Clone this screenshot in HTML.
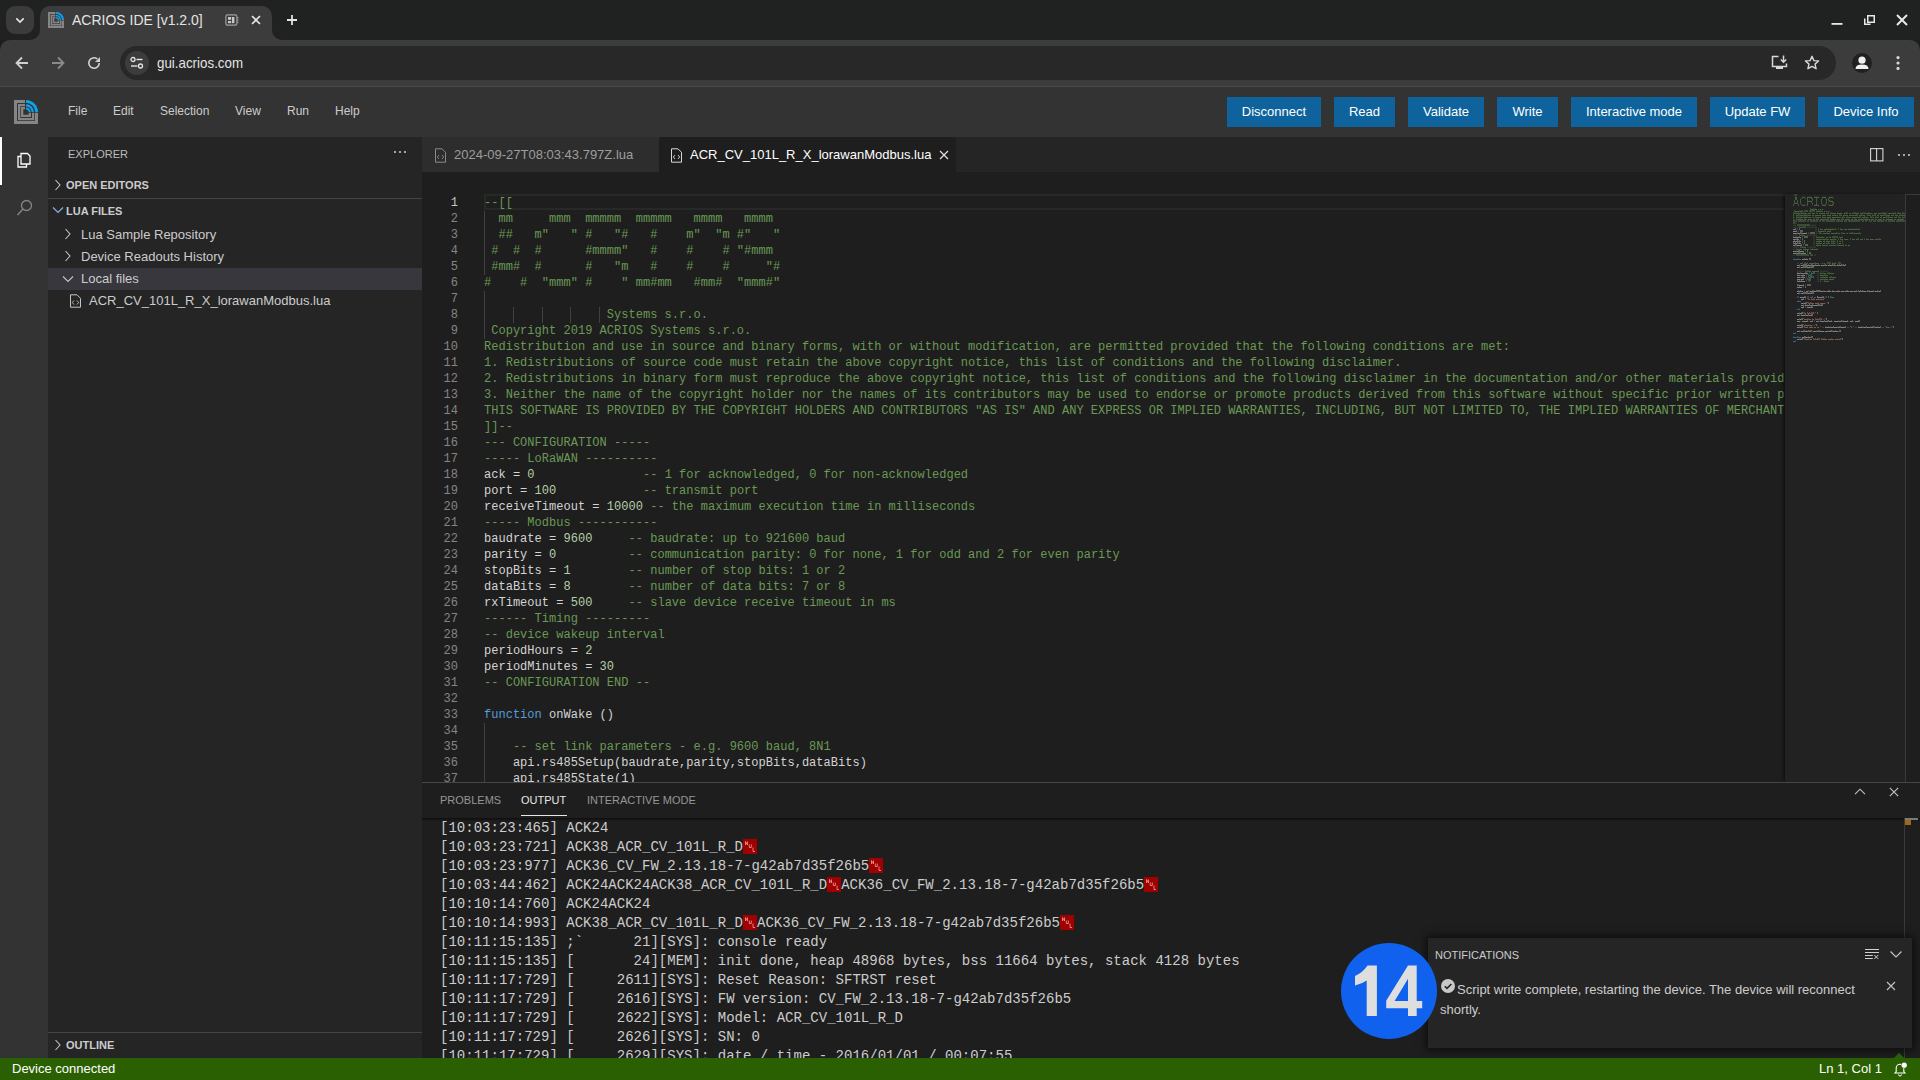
<!DOCTYPE html>
<html><head><meta charset="utf-8">
<style>
*{margin:0;padding:0;box-sizing:border-box}
html,body{width:1920px;height:1080px;overflow:hidden;background:#1e1e1e;font-family:"Liberation Sans",sans-serif}
.a{position:absolute}
/* chrome frame */
#frame{left:0;top:0;width:1920px;height:40px;background:#202121}
#tabdd{left:6px;top:6px;width:28px;height:28px;border-radius:9px;background:#3b3b3b}
#ctab{left:40px;top:6px;width:232px;height:34px;background:#3c3c3c;border-radius:10px 10px 0 0}
.flare{width:10px;height:10px;top:30px}
#ctitle{left:72px;top:11px;font-size:14px;color:#e3e3e3;line-height:18px;white-space:nowrap}
#toolbar{left:0;top:40px;width:1920px;height:46px;background:#3c3c3c;border-radius:10px 10px 0 0}
#tbline{left:0;top:86px;width:1920px;height:1px;background:#4a4a4a}
#omni{left:120px;top:46px;width:1716px;height:34px;border-radius:17px;background:#282828}
#siteinfo{left:125px;top:51px;width:24px;height:24px;border-radius:12px;background:#3c3c3c}
#url{left:157px;top:54px;font-size:15px;color:#e3e3e3;line-height:18px;transform:scaleX(0.89);transform-origin:0 0}
/* ide menubar */
#menubar{left:0;top:87px;width:1920px;height:50px;background:#333333}
.mi{top:103px;font-size:12px;color:#cccccc;line-height:16px}
.btn{top:97px;height:30px;background:#0e639c;color:#ffffff;font-size:13px;line-height:30px;text-align:center}
/* activity bar */
#actbar{left:0;top:137px;width:48px;height:921px;background:#333333}
#actind{left:0;top:137px;width:2px;height:48px;background:#ffffff}
/* sidebar */
#sidebar{left:48px;top:137px;width:374px;height:921px;background:#252526}
.sbh{font-size:11px;color:#bbbbbb;line-height:14px}
.sbsec{font-size:11px;font-weight:bold;color:#cccccc;line-height:14px}
.sbi{font-size:13px;color:#cccccc;line-height:18px;white-space:nowrap}
/* editor */
#tabbar{left:422px;top:137px;width:1498px;height:35px;background:#252526}
#tab1{left:422px;top:137px;width:237px;height:35px;background:#2d2d2d}
#tab2{left:659px;top:137px;width:297px;height:35px;background:#1e1e1e}
.tabt{top:147px;font-size:13px;line-height:16px;white-space:nowrap}
#editor{left:422px;top:172px;width:1498px;height:610px;background:#1e1e1e;overflow:hidden}
.cl{position:absolute;left:484px;width:1300px;overflow:hidden;height:16px;font-family:"Liberation Mono",monospace;font-size:12px;letter-spacing:0.0235px;line-height:16px;color:#d4d4d4;white-space:pre}
.ln{position:absolute;left:420px;width:38px;text-align:right;height:16px;font-family:"Liberation Mono",monospace;font-size:12px;line-height:16px;color:#858585}
.ln.act{color:#c6c6c6}
.ig{position:absolute;width:1px;height:16px;background:#404040}
#curline{left:484px;top:194px;width:1310px;height:16px;border:2px solid #282828}
#mmbg{left:1785px;top:194px;width:120px;height:588px;background:#1e1e1e;box-shadow:-2px 0 3px -1px #0a0a0a}
#mmslider{left:1785px;top:194px;width:120px;height:588px;background:rgba(121,121,121,0.05)}
.mm{position:absolute;left:1793px;top:194px;opacity:0.9}
#vscroll{left:1905px;top:194px;width:1px;height:588px;background:#3a3a3a}
/* panel */
#panel{left:422px;top:782px;width:1498px;height:276px;background:#1e1e1e;border-top:1px solid #474747}
.ptab{top:793px;font-size:11px;line-height:14px;color:#969696}
#outshadow{left:422px;top:818px;width:1498px;height:3px;box-shadow:inset 0 3px 3px -2px #0a0a0a}
.ol{position:absolute;left:440px;height:19px;font-family:"Liberation Mono",monospace;font-size:14px;letter-spacing:0.015px;line-height:19px;color:#cccccc;white-space:pre}
.nul{display:inline-block;width:14px;height:15px;vertical-align:top;margin-top:1px}
/* status bar */
#status{left:0;top:1058px;width:1920px;height:22px;background:#2b6002}
.st{top:1061px;font-size:13px;line-height:16px;color:#ffffff}
/* notification */
#notif{left:1428px;top:938px;width:484px;height:110px;background:#252526;box-shadow:0 0 8px 2px rgba(0,0,0,0.6)}
#circle{left:1341px;top:943px;width:96px;height:96px;border-radius:48px;background:#1062ee}
#circnum{left:1341px;top:943px;width:96px;height:96px;line-height:96px;text-align:center;font-size:71px;font-weight:bold;color:#e0e0e0;letter-spacing:-5px;text-indent:-4px}
</style></head><body>
<!-- ===== Chrome frame ===== -->
<div id="frame" class="a"></div>
<div id="tabdd" class="a"></div>
<svg class="a" style="left:12px;top:13px" width="16" height="14" viewBox="0 0 16 14"><path d="M4.3 5.3 L8 9 L11.7 5.3" stroke="#e3e3e3" stroke-width="1.7" fill="none"/></svg>
<div id="ctab" class="a"></div>
<svg class="a" style="left:30px;top:30px" width="10" height="10"><path d="M0 10 A10 10 0 0 0 10 0 L10 10 Z" fill="#3c3c3c"/></svg>
<svg class="a" style="left:272px;top:30px" width="10" height="10"><path d="M10 10 A10 10 0 0 1 0 0 L0 10 Z" fill="#3c3c3c"/></svg>
<!-- favicon -->
<svg class="a" style="left:48px;top:12px" width="16" height="16" viewBox="0 0 24 24"><g fill="#858585"><path d="M0 0H11V3H3V21H21V12.7H24V24H0Z"/><path d="M4 4H11V6.3H6.3V18H18V12.7H20.3V20.3H4Z"/><path d="M7 7H11V9.3H9.3V14.7H14.7V12.7H17V17H7Z"/></g><g fill="none" stroke="#0ea2ea"><path d="M12 1.4A10.6 10.6 0 0 1 22.6 12" stroke-width="2.7"/><path d="M12 5.3A6.7 6.7 0 0 1 18.7 12" stroke-width="2.2"/><path d="M12 8.4A3.6 3.6 0 0 1 15.6 12" stroke-width="2"/></g></svg>
<div id="ctitle" class="a">ACRIOS IDE [v1.2.0]</div>
<svg class="a" style="left:225px;top:14px" width="14" height="12" viewBox="0 0 14 12"><rect x="0.9" y="0.8" width="11" height="10.4" rx="1.6" stroke="#a0a0a0" stroke-width="1.2" fill="none"/><rect x="3" y="3" width="3.2" height="2.8" fill="#c8c8c8"/><rect x="3" y="7" width="3.2" height="2.2" fill="#c8c8c8"/><rect x="7" y="3" width="2.4" height="6.2" fill="#c8c8c8"/><rect x="12.2" y="3.2" width="1.4" height="1" fill="#a0a0a0"/><rect x="12.2" y="5.5" width="1.4" height="1" fill="#a0a0a0"/><rect x="12.2" y="7.8" width="1.4" height="1" fill="#a0a0a0"/></svg>
<svg class="a" style="left:251px;top:15px" width="10" height="10" viewBox="0 0 10 10"><path d="M1 1 L9 9 M9 1 L1 9" stroke="#e8e8e8" stroke-width="1.6"/></svg>
<svg class="a" style="left:286px;top:14px" width="12" height="12" viewBox="0 0 12 12"><path d="M6 1 V11 M1 6 H11" stroke="#e3e3e3" stroke-width="1.8"/></svg>
<!-- window controls -->
<svg class="a" style="left:1831px;top:14px" width="12" height="12"><rect x="0.5" y="9" width="11" height="1.8" fill="#e8e8e8"/></svg>
<svg class="a" style="left:1864px;top:15px" width="11" height="11"><rect x="3.75" y="0.75" width="6.5" height="6.5" stroke="#e8e8e8" stroke-width="1.5" fill="none"/><path d="M0.75 3.5 V9.25 H6.5" stroke="#e8e8e8" stroke-width="1.5" fill="none"/></svg>
<svg class="a" style="left:1896px;top:14px" width="12" height="12"><path d="M1 1 L11 11 M11 1 L1 11" stroke="#e8e8e8" stroke-width="2"/></svg>

<!-- ===== Toolbar ===== -->
<div id="toolbar" class="a"></div>
<svg class="a" style="left:14px;top:55px" width="16" height="16" viewBox="0 0 16 16"><path d="M14 8 H2.5 M8 2.5 L2.5 8 L8 13.5" stroke="#d0d0d0" stroke-width="1.8" fill="none"/></svg>
<svg class="a" style="left:50px;top:55px" width="16" height="16" viewBox="0 0 16 16"><path d="M2 8 H13.5 M8 2.5 L13.5 8 L8 13.5" stroke="#8a8a8a" stroke-width="1.8" fill="none"/></svg>
<svg class="a" style="left:82px;top:51px" width="24" height="24" viewBox="0 0 24 24"><path d="M17.2 12 A5.2 5.2 0 1 1 15.3 8" stroke="#d0d0d0" stroke-width="1.6" fill="none"/><path d="M18 6 V11 H13 Z" fill="#d0d0d0"/></svg>
<div id="omni" class="a"></div>
<div id="siteinfo" class="a"></div>
<svg class="a" style="left:130px;top:56px" width="14" height="14" viewBox="0 0 14 14"><circle cx="3" cy="3.5" r="2" stroke="#e3e3e3" stroke-width="1.3" fill="none"/><path d="M6.5 3.5 H12.5" stroke="#e3e3e3" stroke-width="1.4"/><circle cx="10.5" cy="10" r="2" stroke="#e3e3e3" stroke-width="1.3" fill="none"/><path d="M1 10 H7.5" stroke="#e3e3e3" stroke-width="1.4"/></svg>
<div id="url" class="a">gui.acrios.com</div>
<svg class="a" style="left:1771px;top:55px" width="18" height="16" viewBox="0 0 18 16"><path d="M7.5 1.5 H1.5 V11.5 H15.5 V8.5" stroke="#d8d8d8" stroke-width="1.5" fill="none"/><rect x="5" y="12" width="7" height="2" fill="#d8d8d8"/><path d="M12.5 0.5 V7 M9.8 4.5 L12.5 7.2 L15.2 4.5" stroke="#d8d8d8" stroke-width="1.5" fill="none"/></svg>
<svg class="a" style="left:1804px;top:55px" width="16" height="16" viewBox="0 0 16 16"><path d="M8 1.3 L9.9 5.6 L14.6 6 L11 9.1 L12.1 13.7 L8 11.3 L3.9 13.7 L5 9.1 L1.4 6 L6.1 5.6 Z" stroke="#d8d8d8" stroke-width="1.4" fill="none" stroke-linejoin="round"/></svg>
<div class="a" style="left:1852px;top:53px;width:20px;height:20px;border-radius:10px;background:#202020"></div>
<svg class="a" style="left:1852px;top:53px" width="20" height="20" viewBox="0 0 20 20"><circle cx="10" cy="7.2" r="3.6" fill="#f0f0f0"/><path d="M3.5 16 Q3.5 11.6 10 11.6 Q16.5 11.6 16.5 16 Z" fill="#f0f0f0"/></svg>
<svg class="a" style="left:1894px;top:55px" width="8" height="16"><circle cx="4" cy="2.6" r="1.6" fill="#d8d8d8"/><circle cx="4" cy="8" r="1.6" fill="#d8d8d8"/><circle cx="4" cy="13.4" r="1.6" fill="#d8d8d8"/></svg>
<div id="tbline" class="a"></div>

<!-- ===== IDE menubar ===== -->
<div id="menubar" class="a"></div>
<svg class="a" style="left:14px;top:100px" width="24" height="24" viewBox="0 0 24 24"><g fill="#858585"><path d="M0 0H11V3H3V21H21V12.7H24V24H0Z"/><path d="M4 4H11V6.3H6.3V18H18V12.7H20.3V20.3H4Z"/><path d="M7 7H11V9.3H9.3V14.7H14.7V12.7H17V17H7Z"/></g><g fill="none" stroke="#0ea2ea"><path d="M12 1.4A10.6 10.6 0 0 1 22.6 12" stroke-width="2.7"/><path d="M12 5.3A6.7 6.7 0 0 1 18.7 12" stroke-width="2.2"/><path d="M12 8.4A3.6 3.6 0 0 1 15.6 12" stroke-width="2"/></g></svg>
<div class="a mi" style="left:68px">File</div>
<div class="a mi" style="left:113px">Edit</div>
<div class="a mi" style="left:160px">Selection</div>
<div class="a mi" style="left:235px">View</div>
<div class="a mi" style="left:287px">Run</div>
<div class="a mi" style="left:335px">Help</div>
<div class="a btn" style="left:1227px;width:94px">Disconnect</div>
<div class="a btn" style="left:1334px;width:61px">Read</div>
<div class="a btn" style="left:1408px;width:76px">Validate</div>
<div class="a btn" style="left:1497px;width:61px">Write</div>
<div class="a btn" style="left:1571px;width:126px">Interactive mode</div>
<div class="a btn" style="left:1710px;width:95px">Update FW</div>
<div class="a btn" style="left:1818px;width:96px">Device Info</div>

<!-- ===== Activity bar ===== -->
<div id="actbar" class="a"></div>
<div id="actind" class="a"></div>
<svg class="a" style="left:14px;top:150px" width="20" height="20" viewBox="0 0 20 20"><path d="M7 3.5 H13.5 L16 6 V14 H7 Z" stroke="#ffffff" stroke-width="1.3" fill="none"/><path d="M7 6.5 H4 V17 H12.5 V14" stroke="#ffffff" stroke-width="1.3" fill="none"/></svg>
<svg class="a" style="left:15px;top:198px" width="20" height="20" viewBox="0 0 20 20"><circle cx="11.5" cy="7.5" r="5" stroke="#858585" stroke-width="1.3" fill="none"/><path d="M8 11 L2.5 17" stroke="#858585" stroke-width="1.4"/></svg>

<!-- ===== Sidebar ===== -->
<div id="sidebar" class="a"></div>
<div class="a sbh" style="left:68px;top:147px">EXPLORER</div>
<svg class="a" style="left:392px;top:148px" width="16" height="8"><circle cx="3" cy="4" r="1.1" fill="#c5c5c5"/><circle cx="8" cy="4" r="1.1" fill="#c5c5c5"/><circle cx="13" cy="4" r="1.1" fill="#c5c5c5"/></svg>
<svg class="a" style="left:54px;top:179px" width="8" height="12" viewBox="0 0 8 12"><path d="M1.5 1 L6 6 L1.5 11" stroke="#c5c5c5" stroke-width="1.1" fill="none"/></svg>
<div class="a sbsec" style="left:66px;top:178px">OPEN EDITORS</div>
<div class="a" style="left:48px;top:198px;width:374px;height:1px;background:#454545"></div>
<svg class="a" style="left:52px;top:206px" width="12" height="8" viewBox="0 0 12 8"><path d="M1 1.5 L6 6.5 L11 1.5" stroke="#8fb4dc" stroke-width="1.1" fill="none"/></svg>
<div class="a sbsec" style="left:66px;top:204px">LUA FILES</div>
<svg class="a" style="left:64px;top:228px" width="8" height="12" viewBox="0 0 8 12"><path d="M1.5 1 L6 6 L1.5 11" stroke="#c5c5c5" stroke-width="1.1" fill="none"/></svg>
<div class="a sbi" style="left:81px;top:226px">Lua Sample Repository</div>
<svg class="a" style="left:64px;top:250px" width="8" height="12" viewBox="0 0 8 12"><path d="M1.5 1 L6 6 L1.5 11" stroke="#c5c5c5" stroke-width="1.1" fill="none"/></svg>
<div class="a sbi" style="left:81px;top:248px">Device Readouts History</div>
<div class="a" style="left:48px;top:268px;width:374px;height:22px;background:#37373d"></div>
<svg class="a" style="left:62px;top:275px" width="12" height="8" viewBox="0 0 12 8"><path d="M1 1.5 L6 6.5 L11 1.5" stroke="#c5c5c5" stroke-width="1.1" fill="none"/></svg>
<div class="a sbi" style="left:81px;top:270px">Local files</div>
<svg class="a" style="left:69px;top:294px" width="13" height="14" viewBox="0 0 13 14"><path d="M1.5 0.8 H8 L11.5 4.3 V13.2 H1.5 Z" stroke="#c5c5c5" stroke-width="1" fill="none"/><path d="M5 6.5 L3.3 8.5 L5 10.5 M8 6.5 L9.7 8.5 L8 10.5" stroke="#c5c5c5" stroke-width="0.9" fill="none"/></svg>
<div class="a sbi" style="left:89px;top:292px">ACR_CV_101L_R_X_lorawanModbus.lua</div>
<div class="a" style="left:48px;top:1032px;width:374px;height:1px;background:#454545"></div>
<svg class="a" style="left:54px;top:1039px" width="8" height="12" viewBox="0 0 8 12"><path d="M1.5 1 L6 6 L1.5 11" stroke="#c5c5c5" stroke-width="1.1" fill="none"/></svg>
<div class="a sbsec" style="left:66px;top:1038px">OUTLINE</div>

<!-- ===== Editor ===== -->
<div id="tabbar" class="a"></div>
<div id="tab1" class="a"></div>
<div id="tab2" class="a"></div>
<svg class="a" style="left:434px;top:148px" width="13" height="15" viewBox="0 0 13 15"><path d="M1.5 0.8 H8 L11.5 4.3 V14.2 H1.5 Z" stroke="#8a8a8a" stroke-width="1" fill="none"/><path d="M5 7 L3.3 9 L5 11 M8 7 L9.7 9 L8 11" stroke="#8a8a8a" stroke-width="0.9" fill="none"/></svg>
<div class="a tabt" style="left:454px;color:#9d9d9d">2024-09-27T08:03:43.797Z.lua</div>
<svg class="a" style="left:670px;top:148px" width="13" height="15" viewBox="0 0 13 15"><path d="M1.5 0.8 H8 L11.5 4.3 V14.2 H1.5 Z" stroke="#d8d8d8" stroke-width="1" fill="none"/><path d="M5 7 L3.3 9 L5 11 M8 7 L9.7 9 L8 11" stroke="#d8d8d8" stroke-width="0.9" fill="none"/></svg>
<div class="a tabt" style="left:690px;color:#ffffff">ACR_CV_101L_R_X_lorawanModbus.lua</div>
<svg class="a" style="left:939px;top:150px" width="10" height="10"><path d="M1 1 L9 9 M9 1 L1 9" stroke="#e0e0e0" stroke-width="1.2"/></svg>
<svg class="a" style="left:1869px;top:147px" width="16" height="16" viewBox="0 0 16 16"><rect x="1.6" y="1.6" width="12.3" height="12.3" stroke="#d8d8d8" stroke-width="1.1" fill="none"/><path d="M7.6 1.6 V13.9" stroke="#d8d8d8" stroke-width="1.1"/></svg>
<svg class="a" style="left:1896px;top:151px" width="16" height="8"><circle cx="3" cy="4" r="1.1" fill="#c5c5c5"/><circle cx="8" cy="4" r="1.1" fill="#c5c5c5"/><circle cx="13" cy="4" r="1.1" fill="#c5c5c5"/></svg>

<div id="editor" class="a"></div>
<div id="curline" class="a"></div>
<div class="ig" style="left:484.0px;top:211px"></div>
<div class="ig" style="left:484.0px;top:227px"></div>
<div class="ig" style="left:484.0px;top:243px"></div>
<div class="ig" style="left:484.0px;top:259px"></div>
<div class="ig" style="left:484.0px;top:291px"></div>
<div class="ig" style="left:484.0px;top:307px"></div>
<div class="ig" style="left:484.0px;top:323px"></div>
<div class="ig" style="left:512.8px;top:307px"></div>
<div class="ig" style="left:541.6px;top:307px"></div>
<div class="ig" style="left:570.4px;top:307px"></div>
<div class="ig" style="left:599.2px;top:307px"></div>
<div class="ig" style="left:484.0px;top:723px"></div>
<div class="ig" style="left:484.0px;top:739px"></div>
<div class="ig" style="left:484.0px;top:755px"></div>
<div class="ig" style="left:484.0px;top:771px"></div>
<div class="cl" style="top:195px"><span style="color:#6a9955">--[[</span></div>
<div class="ln act" style="top:195px">1</div>
<div class="cl" style="top:211px"><span style="color:#6a9955">  mm     mmm  mmmmm  mmmmm   mmmm   mmmm</span></div>
<div class="ln" style="top:211px">2</div>
<div class="cl" style="top:227px"><span style="color:#6a9955">  ##   m&quot;   &quot; #   &quot;#   #    m&quot;  &quot;m #&quot;   &quot;</span></div>
<div class="ln" style="top:227px">3</div>
<div class="cl" style="top:243px"><span style="color:#6a9955"> #  #  #      #mmmm&quot;   #    #    # &quot;#mmm</span></div>
<div class="ln" style="top:243px">4</div>
<div class="cl" style="top:259px"><span style="color:#6a9955"> #mm#  #      #   &quot;m   #    #    #     &quot;#</span></div>
<div class="ln" style="top:259px">5</div>
<div class="cl" style="top:275px"><span style="color:#6a9955">#    #  &quot;mmm&quot; #    &quot; mm#mm   #mm#  &quot;mmm#&quot;</span></div>
<div class="ln" style="top:275px">6</div>
<div class="cl" style="top:291px"><span style="color:#6a9955"></span></div>
<div class="ln" style="top:291px">7</div>
<div class="cl" style="top:307px"><span style="color:#6a9955">                 Systems s.r.o.</span></div>
<div class="ln" style="top:307px">8</div>
<div class="cl" style="top:323px"><span style="color:#6a9955"> Copyright 2019 ACRIOS Systems s.r.o.</span></div>
<div class="ln" style="top:323px">9</div>
<div class="cl" style="top:339px"><span style="color:#6a9955">Redistribution and use in source and binary forms, with or without modification, are permitted provided that the following conditions are met:</span></div>
<div class="ln" style="top:339px">10</div>
<div class="cl" style="top:355px"><span style="color:#6a9955">1. Redistributions of source code must retain the above copyright notice, this list of conditions and the following disclaimer.</span></div>
<div class="ln" style="top:355px">11</div>
<div class="cl" style="top:371px"><span style="color:#6a9955">2. Redistributions in binary form must reproduce the above copyright notice, this list of conditions and the following disclaimer in the documentation and/or other materials provided with the distribution.</span></div>
<div class="ln" style="top:371px">12</div>
<div class="cl" style="top:387px"><span style="color:#6a9955">3. Neither the name of the copyright holder nor the names of its contributors may be used to endorse or promote products derived from this software without specific prior written permission.</span></div>
<div class="ln" style="top:387px">13</div>
<div class="cl" style="top:403px"><span style="color:#6a9955">THIS SOFTWARE IS PROVIDED BY THE COPYRIGHT HOLDERS AND CONTRIBUTORS &quot;AS IS&quot; AND ANY EXPRESS OR IMPLIED WARRANTIES, INCLUDING, BUT NOT LIMITED TO, THE IMPLIED WARRANTIES OF MERCHANTABILITY AND FITNESS FOR A PARTICULAR PURPOSE ARE DISCLAIMED.</span></div>
<div class="ln" style="top:403px">14</div>
<div class="cl" style="top:419px"><span style="color:#6a9955">]]--</span></div>
<div class="ln" style="top:419px">15</div>
<div class="cl" style="top:435px"><span style="color:#6a9955">--- CONFIGURATION -----</span></div>
<div class="ln" style="top:435px">16</div>
<div class="cl" style="top:451px"><span style="color:#6a9955">----- LoRaWAN ----------</span></div>
<div class="ln" style="top:451px">17</div>
<div class="cl" style="top:467px">ack = <span style="color:#b5cea8">0</span>               <span style="color:#6a9955">-- 1 for acknowledged, 0 for non-acknowledged</span></div>
<div class="ln" style="top:467px">18</div>
<div class="cl" style="top:483px">port = <span style="color:#b5cea8">100</span>            <span style="color:#6a9955">-- transmit port</span></div>
<div class="ln" style="top:483px">19</div>
<div class="cl" style="top:499px">receiveTimeout = <span style="color:#b5cea8">10000</span> <span style="color:#6a9955">-- the maximum execution time in milliseconds</span></div>
<div class="ln" style="top:499px">20</div>
<div class="cl" style="top:515px"><span style="color:#6a9955">----- Modbus -----------</span></div>
<div class="ln" style="top:515px">21</div>
<div class="cl" style="top:531px">baudrate = <span style="color:#b5cea8">9600</span>     <span style="color:#6a9955">-- baudrate: up to 921600 baud</span></div>
<div class="ln" style="top:531px">22</div>
<div class="cl" style="top:547px">parity = <span style="color:#b5cea8">0</span>          <span style="color:#6a9955">-- communication parity: 0 for none, 1 for odd and 2 for even parity</span></div>
<div class="ln" style="top:547px">23</div>
<div class="cl" style="top:563px">stopBits = <span style="color:#b5cea8">1</span>        <span style="color:#6a9955">-- number of stop bits: 1 or 2</span></div>
<div class="ln" style="top:563px">24</div>
<div class="cl" style="top:579px">dataBits = <span style="color:#b5cea8">8</span>        <span style="color:#6a9955">-- number of data bits: 7 or 8</span></div>
<div class="ln" style="top:579px">25</div>
<div class="cl" style="top:595px">rxTimeout = <span style="color:#b5cea8">500</span>     <span style="color:#6a9955">-- slave device receive timeout in ms</span></div>
<div class="ln" style="top:595px">26</div>
<div class="cl" style="top:611px"><span style="color:#6a9955">------ Timing ---------</span></div>
<div class="ln" style="top:611px">27</div>
<div class="cl" style="top:627px"><span style="color:#6a9955">-- device wakeup interval</span></div>
<div class="ln" style="top:627px">28</div>
<div class="cl" style="top:643px">periodHours = <span style="color:#b5cea8">2</span></div>
<div class="ln" style="top:643px">29</div>
<div class="cl" style="top:659px">periodMinutes = <span style="color:#b5cea8">30</span></div>
<div class="ln" style="top:659px">30</div>
<div class="cl" style="top:675px"><span style="color:#6a9955">-- CONFIGURATION END --</span></div>
<div class="ln" style="top:675px">31</div>
<div class="cl" style="top:691px"></div>
<div class="ln" style="top:691px">32</div>
<div class="cl" style="top:707px"><span style="color:#569cd6">function</span> onWake ()</div>
<div class="ln" style="top:707px">33</div>
<div class="cl" style="top:723px"></div>
<div class="ln" style="top:723px">34</div>
<div class="cl" style="top:739px">    <span style="color:#6a9955">-- set link parameters - e.g. 9600 baud, 8N1</span></div>
<div class="ln" style="top:739px">35</div>
<div class="cl" style="top:755px">    api.rs485Setup(baudrate,parity,stopBits,dataBits)</div>
<div class="ln" style="top:755px">36</div>
<div class="cl" style="top:771px">    api.rs485State(1)</div>
<div class="ln" style="top:771px">37</div>
<div id="mmbg" class="a"></div>
<div id="mmslider" class="a"></div>
<svg class="mm" width="112" height="160" viewBox="0 0 112 160"><path fill="#569cd6" fill-opacity="0.2" d="M5 64h1v1h-1zM4 102h1v1h-1zM18 102h1v1h-1zM5 142h1v1h-1z"/><path fill="#569cd6" fill-opacity="0.3" d="M0 64h1v1h-1zM4 64h1v1h-1zM5 102h1v1h-1zM19 102h1v1h-1zM37 102h2v1h-2zM5 106h1v1h-1zM6 114h1v1h-1zM2 138h1v1h-1zM0 142h1v1h-1zM4 142h1v1h-1zM2 146h1v1h-1z"/><path fill="#569cd6" fill-opacity="0.4" d="M5 65h1v1h-1zM4 103h1v1h-1zM18 103h1v1h-1zM5 143h1v1h-1z"/><path fill="#569cd6" fill-opacity="0.5" d="M0 65h1v1h-1zM4 65h1v1h-1zM5 103h1v1h-1zM19 103h1v1h-1zM37 103h2v1h-2zM5 107h1v1h-1zM6 115h1v1h-1zM2 139h1v1h-1zM0 143h1v1h-1zM4 143h1v1h-1zM2 147h1v1h-1z"/><path fill="#569cd6" fill-opacity="0.6" d="M1 65h3v1h-3zM6 65h2v1h-2zM17 103h1v1h-1zM21 103h2v1h-2zM39 103h2v1h-2zM4 107h1v1h-1zM6 107h2v1h-2zM4 115h2v1h-2zM0 139h2v1h-2zM1 143h3v1h-3zM6 143h2v1h-2zM0 147h2v1h-2z"/><path fill="#5fb8a0" fill-opacity="0.4" d="M18 78h1v1h-1zM20 78h2v1h-2zM18 79h1v1h-1zM20 79h2v1h-2zM15 80h1v1h-1zM17 80h2v1h-2zM15 81h1v1h-1zM17 81h2v1h-2zM15 82h1v1h-1zM17 82h4v1h-4zM15 83h1v1h-1zM17 83h4v1h-4zM14 84h1v1h-1zM16 84h2v1h-2zM14 85h1v1h-1zM16 85h2v1h-2z"/><path fill="#5fb8a0" fill-opacity="0.6" d="M19 79h1v1h-1zM16 81h1v1h-1zM16 83h1v1h-1zM15 85h1v1h-1z"/><path fill="#6a9955" fill-opacity="0.1" d="M0 0h2v1h-2zM2 2h2v1h-2zM9 2h3v1h-3zM14 2h5v1h-5zM21 2h5v1h-5zM29 2h4v1h-4zM36 2h4v1h-4zM7 4h1v1h-1zM28 4h1v1h-1zM33 4h1v1h-1zM15 6h4v1h-4zM37 6h3v1h-3zM2 8h2v1h-2zM19 8h1v1h-1zM9 10h3v1h-3zM21 10h2v1h-2zM24 10h2v1h-2zM30 10h2v1h-2zM36 10h3v1h-3zM22 14h1v1h-1zM28 16h1v1h-1zM47 18h1v1h-1zM51 18h1v1h-1zM59 18h1v1h-1zM67 18h1v1h-1zM88 18h1v1h-1zM34 20h1v1h-1zM111 20h1v1h-1zM32 22h1v1h-1zM34 22h1v1h-1zM17 24h1v1h-1zM54 24h1v1h-1zM78 24h1v1h-1zM107 24h1v1h-1zM2 28h2v1h-2zM0 30h3v1h-3zM18 30h5v1h-5zM0 32h5v1h-5zM14 32h10v1h-10zM22 34h2v1h-2zM36 34h1v1h-1zM54 34h1v1h-1zM60 34h1v1h-1zM22 36h2v1h-2zM30 36h1v1h-1zM23 38h2v1h-2zM30 38h1v1h-1zM34 38h1v1h-1zM36 38h1v1h-1zM50 38h1v1h-1zM56 38h1v1h-1zM0 40h5v1h-5zM13 40h11v1h-11zM20 42h2v1h-2zM31 42h1v1h-1zM20 44h2v1h-2zM25 44h2v1h-2zM43 44h1v1h-1zM20 46h2v1h-2zM25 46h1v1h-1zM42 46h1v1h-1zM20 48h2v1h-2zM25 48h1v1h-1zM42 48h1v1h-1zM20 50h2v1h-2zM46 50h1v1h-1zM55 50h1v1h-1zM0 52h6v1h-6zM9 52h1v1h-1zM14 52h9v1h-9zM0 54h2v1h-2zM10 54h1v1h-1zM0 60h2v1h-2zM21 60h2v1h-2zM4 68h2v1h-2zM20 68h1v1h-1zM27 68h1v1h-1zM4 76h7v1h-7zM27 76h8v1h-8zM24 78h2v1h-2zM24 80h2v1h-2zM24 82h2v1h-2zM24 84h2v1h-2zM24 86h2v1h-2zM29 86h1v1h-1z"/><path fill="#6a9955" fill-opacity="0.2" d="M0 1h2v1h-2zM26 15h1v1h-1zM28 15h1v1h-1zM30 15h1v1h-1zM6 16h1v1h-1zM32 17h1v1h-1zM34 17h1v1h-1zM36 17h1v1h-1zM3 18h1v1h-1zM7 18h1v1h-1zM11 18h1v1h-1zM23 18h1v1h-1zM38 18h1v1h-1zM52 18h1v1h-1zM60 18h1v1h-1zM70 18h1v1h-1zM72 18h1v1h-1zM76 18h1v1h-1zM89 18h1v1h-1zM99 18h1v1h-1zM49 19h1v1h-1zM79 19h1v1h-1zM6 20h1v1h-1zM10 20h1v1h-1zM14 20h1v1h-1zM43 20h1v1h-1zM61 20h1v1h-1zM69 20h1v1h-1zM76 20h1v1h-1zM80 20h1v1h-1zM91 20h1v1h-1zM93 20h1v1h-1zM1 21h1v1h-1zM72 21h1v1h-1zM6 22h1v1h-1zM10 22h1v1h-1zM14 22h1v1h-1zM19 22h1v1h-1zM23 22h1v1h-1zM64 22h1v1h-1zM72 22h1v1h-1zM79 22h1v1h-1zM83 22h1v1h-1zM94 22h1v1h-1zM96 22h1v1h-1zM1 23h1v1h-1zM75 23h1v1h-1zM5 24h1v1h-1zM32 24h1v1h-1zM61 24h1v1h-1zM70 24h1v1h-1zM1 25h1v1h-1zM2 29h2v1h-2zM0 31h3v1h-3zM18 31h5v1h-5zM0 33h5v1h-5zM14 33h10v1h-10zM22 35h2v1h-2zM43 35h1v1h-1zM54 35h1v1h-1zM31 36h1v1h-1zM22 37h2v1h-2zM33 38h1v1h-1zM44 38h1v1h-1zM49 38h1v1h-1zM53 38h1v1h-1zM57 38h1v1h-1zM60 38h1v1h-1zM23 39h2v1h-2zM0 41h5v1h-5zM13 41h11v1h-11zM20 43h2v1h-2zM31 43h1v1h-1zM29 44h1v1h-1zM33 44h1v1h-1zM40 44h1v1h-1zM85 44h1v1h-1zM20 45h2v1h-2zM43 45h1v1h-1zM55 45h1v1h-1zM39 46h1v1h-1zM20 47h2v1h-2zM42 47h1v1h-1zM39 48h1v1h-1zM20 49h2v1h-2zM42 49h1v1h-1zM32 50h1v1h-1zM40 50h1v1h-1zM45 50h1v1h-1zM52 50h1v1h-1zM20 51h2v1h-2zM8 52h1v1h-1zM10 52h1v1h-1zM0 53h6v1h-6zM14 53h9v1h-9zM6 54h1v1h-1zM17 54h1v1h-1zM0 55h2v1h-2zM0 61h2v1h-2zM21 61h2v1h-2zM12 68h1v1h-1zM4 69h2v1h-2zM27 69h1v1h-1zM30 69h1v1h-1zM32 69h1v1h-1zM43 69h1v1h-1zM4 77h7v1h-7zM27 77h8v1h-8zM30 78h1v1h-1zM24 79h2v1h-2zM32 80h1v1h-1zM24 81h2v1h-2zM30 82h1v1h-1zM24 83h2v1h-2zM30 84h1v1h-1zM24 85h2v1h-2zM24 87h2v1h-2zM29 87h1v1h-1z"/><path fill="#6a9955" fill-opacity="0.3" d="M20 14h1v1h-1zM8 16h2v1h-2zM26 16h1v1h-1zM2 18h1v1h-1zM5 18h1v1h-1zM8 18h1v1h-1zM10 18h1v1h-1zM17 18h1v1h-1zM35 18h1v1h-1zM37 18h1v1h-1zM44 18h1v1h-1zM53 18h2v1h-2zM61 18h2v1h-2zM65 18h1v1h-1zM69 18h1v1h-1zM71 18h1v1h-1zM75 18h1v1h-1zM90 18h2v1h-2zM93 18h1v1h-1zM100 18h1v1h-1zM102 18h1v1h-1zM104 18h2v1h-2zM107 18h1v1h-1zM109 18h2v1h-2zM5 20h1v1h-1zM8 20h1v1h-1zM11 20h1v1h-1zM13 20h1v1h-1zM20 20h1v1h-1zM31 20h1v1h-1zM37 20h1v1h-1zM41 20h1v1h-1zM46 20h2v1h-2zM51 20h1v1h-1zM63 20h2v1h-2zM68 20h1v1h-1zM74 20h2v1h-2zM79 20h1v1h-1zM82 20h1v1h-1zM85 20h1v1h-1zM90 20h1v1h-1zM92 20h1v1h-1zM100 20h1v1h-1zM102 20h2v1h-2zM106 20h1v1h-1zM108 20h2v1h-2zM5 22h1v1h-1zM8 22h1v1h-1zM11 22h1v1h-1zM13 22h1v1h-1zM22 22h1v1h-1zM29 22h1v1h-1zM37 22h1v1h-1zM44 22h1v1h-1zM49 22h2v1h-2zM54 22h1v1h-1zM66 22h2v1h-2zM71 22h1v1h-1zM77 22h2v1h-2zM82 22h1v1h-1zM85 22h1v1h-1zM88 22h1v1h-1zM93 22h1v1h-1zM95 22h1v1h-1zM103 22h1v1h-1zM105 22h2v1h-2zM109 22h1v1h-1zM111 22h1v1h-1zM6 24h2v1h-2zM11 24h2v1h-2zM21 24h1v1h-1zM23 24h2v1h-2zM34 24h2v1h-2zM37 24h1v1h-1zM39 24h2v1h-2zM48 24h2v1h-2zM59 24h1v1h-1zM62 24h1v1h-1zM68 24h1v1h-1zM71 24h1v1h-1zM73 24h1v1h-1zM82 24h1v1h-1zM88 24h1v1h-1zM90 24h1v1h-1zM95 24h1v1h-1zM109 24h1v1h-1zM27 34h1v1h-1zM33 34h1v1h-1zM37 34h1v1h-1zM39 34h1v1h-1zM42 34h1v1h-1zM47 34h1v1h-1zM57 34h1v1h-1zM61 34h1v1h-1zM63 34h1v1h-1zM66 34h1v1h-1zM25 36h1v1h-1zM32 36h1v1h-1zM37 36h1v1h-1zM26 38h2v1h-2zM43 38h1v1h-1zM48 38h1v1h-1zM58 38h2v1h-2zM66 38h1v1h-1zM8 40h2v1h-2zM23 42h1v1h-1zM26 42h1v1h-1zM29 42h1v1h-1zM36 42h1v1h-1zM46 42h1v1h-1zM49 42h1v1h-1zM32 44h1v1h-1zM41 44h1v1h-1zM47 44h1v1h-1zM59 44h1v1h-1zM64 44h2v1h-2zM69 44h1v1h-1zM73 44h1v1h-1zM86 44h1v1h-1zM26 46h1v1h-1zM31 46h1v1h-1zM34 46h1v1h-1zM38 46h1v1h-1zM40 46h1v1h-1zM26 48h1v1h-1zM31 48h1v1h-1zM33 48h1v1h-1zM35 48h1v1h-1zM38 48h1v1h-1zM40 48h1v1h-1zM24 50h1v1h-1zM29 50h1v1h-1zM44 50h1v1h-1zM50 50h1v1h-1zM3 54h1v1h-1zM12 54h1v1h-1zM19 54h1v1h-1zM24 54h1v1h-1zM9 68h1v1h-1zM11 68h1v1h-1zM14 68h1v1h-1zM22 68h1v1h-1zM39 68h1v1h-1zM42 68h1v1h-1zM14 76h2v1h-2zM25 76h1v1h-1zM27 78h1v1h-1zM35 78h2v1h-2zM27 80h1v1h-1zM31 80h1v1h-1zM32 82h1v1h-1zM37 82h2v1h-2zM32 84h1v1h-1zM40 84h1v1h-1zM27 86h1v1h-1zM31 86h2v1h-2zM35 86h1v1h-1z"/><path fill="#6a9955" fill-opacity="0.4" d="M2 0h2v1h-2zM2 1h2v1h-2zM8 4h1v1h-1zM12 4h1v1h-1zM18 4h1v1h-1zM29 4h1v1h-1zM32 4h1v1h-1zM36 4h1v1h-1zM40 4h1v1h-1zM19 6h1v1h-1zM35 6h1v1h-1zM18 8h1v1h-1zM39 8h1v1h-1zM8 10h1v1h-1zM12 10h1v1h-1zM19 10h1v1h-1zM35 10h1v1h-1zM40 10h1v1h-1zM17 14h1v1h-1zM17 15h1v1h-1zM1 16h1v1h-1zM11 16h4v1h-4zM16 16h6v1h-6zM23 16h1v1h-1zM1 17h1v1h-1zM6 17h1v1h-1zM11 17h4v1h-4zM16 17h6v1h-6zM23 17h1v1h-1zM0 18h1v1h-1zM0 19h1v1h-1zM3 19h1v1h-1zM7 19h1v1h-1zM11 19h1v1h-1zM23 19h1v1h-1zM38 19h1v1h-1zM52 19h1v1h-1zM60 19h1v1h-1zM70 19h1v1h-1zM72 19h1v1h-1zM76 19h1v1h-1zM89 19h1v1h-1zM99 19h1v1h-1zM0 20h1v1h-1zM3 20h1v1h-1zM0 21h1v1h-1zM3 21h1v1h-1zM6 21h1v1h-1zM10 21h1v1h-1zM14 21h1v1h-1zM43 21h1v1h-1zM61 21h1v1h-1zM69 21h1v1h-1zM76 21h1v1h-1zM80 21h1v1h-1zM91 21h1v1h-1zM93 21h1v1h-1zM0 22h1v1h-1zM3 22h1v1h-1zM0 23h1v1h-1zM3 23h1v1h-1zM6 23h1v1h-1zM10 23h1v1h-1zM14 23h1v1h-1zM19 23h1v1h-1zM23 23h1v1h-1zM64 23h1v1h-1zM72 23h1v1h-1zM79 23h1v1h-1zM83 23h1v1h-1zM94 23h1v1h-1zM96 23h1v1h-1zM0 24h1v1h-1zM3 24h1v1h-1zM0 25h1v1h-1zM3 25h1v1h-1zM5 25h1v1h-1zM32 25h1v1h-1zM61 25h1v1h-1zM70 25h1v1h-1zM0 26h4v1h-4zM5 26h8v1h-8zM14 26h2v1h-2zM17 26h8v1h-8zM26 26h2v1h-2zM29 26h3v1h-3zM33 26h9v1h-9zM43 26h7v1h-7zM51 26h3v1h-3zM55 26h12v1h-12zM68 26h3v1h-3zM72 26h3v1h-3zM76 26h3v1h-3zM80 26h3v1h-3zM84 26h7v1h-7zM92 26h2v1h-2zM95 26h7v1h-7zM103 26h9v1h-9zM0 27h4v1h-4zM5 27h8v1h-8zM14 27h2v1h-2zM17 27h8v1h-8zM26 27h2v1h-2zM29 27h3v1h-3zM33 27h9v1h-9zM43 27h7v1h-7zM51 27h3v1h-3zM55 27h12v1h-12zM69 27h2v1h-2zM72 27h2v1h-2zM76 27h3v1h-3zM80 27h3v1h-3zM84 27h7v1h-7zM92 27h2v1h-2zM95 27h7v1h-7zM103 27h9v1h-9zM0 28h2v1h-2zM0 29h2v1h-2zM4 30h13v1h-13zM4 31h13v1h-13zM6 32h1v1h-1zM8 32h1v1h-1zM10 32h3v1h-3zM6 33h1v1h-1zM8 33h1v1h-1zM10 33h3v1h-3zM25 34h1v1h-1zM45 34h1v1h-1zM25 35h1v1h-1zM45 35h1v1h-1zM31 37h1v1h-1zM33 39h1v1h-1zM44 39h1v1h-1zM49 39h1v1h-1zM53 39h1v1h-1zM57 39h1v1h-1zM60 39h1v1h-1zM6 40h1v1h-1zM6 41h1v1h-1zM39 42h6v1h-6zM39 43h6v1h-6zM45 44h1v1h-1zM57 44h1v1h-1zM71 44h1v1h-1zM29 45h1v1h-1zM33 45h1v1h-1zM40 45h1v1h-1zM45 45h1v1h-1zM57 45h1v1h-1zM71 45h1v1h-1zM85 45h1v1h-1zM44 46h1v1h-1zM49 46h1v1h-1zM39 47h1v1h-1zM44 47h1v1h-1zM49 47h1v1h-1zM44 48h1v1h-1zM49 48h1v1h-1zM39 49h1v1h-1zM44 49h1v1h-1zM49 49h1v1h-1zM32 51h1v1h-1zM40 51h1v1h-1zM45 51h1v1h-1zM52 51h1v1h-1zM7 52h1v1h-1zM7 53h2v1h-2zM10 53h1v1h-1zM6 55h1v1h-1zM17 55h1v1h-1zM3 60h13v1h-13zM17 60h3v1h-3zM3 61h13v1h-13zM17 61h3v1h-3zM34 68h4v1h-4zM45 68h3v1h-3zM12 69h1v1h-1zM34 69h4v1h-4zM45 69h3v1h-3zM12 76h1v1h-1zM12 77h1v1h-1zM30 79h1v1h-1zM32 81h1v1h-1zM30 83h1v1h-1zM30 85h1v1h-1z"/><path fill="#6a9955" fill-opacity="0.5" d="M2 4h2v1h-2zM14 4h1v1h-1zM19 4h1v1h-1zM23 4h1v1h-1zM35 4h1v1h-1zM2 5h2v1h-2zM14 5h1v1h-1zM19 5h1v1h-1zM23 5h1v1h-1zM35 5h1v1h-1zM1 6h1v1h-1zM4 6h1v1h-1zM7 6h1v1h-1zM14 6h1v1h-1zM23 6h1v1h-1zM28 6h1v1h-1zM33 6h1v1h-1zM36 6h1v1h-1zM1 7h1v1h-1zM4 7h1v1h-1zM7 7h1v1h-1zM14 7h1v1h-1zM23 7h1v1h-1zM28 7h1v1h-1zM33 7h1v1h-1zM36 7h1v1h-1zM1 8h1v1h-1zM4 8h1v1h-1zM7 8h1v1h-1zM14 8h1v1h-1zM23 8h1v1h-1zM28 8h1v1h-1zM33 8h1v1h-1zM40 8h1v1h-1zM1 9h1v1h-1zM4 9h1v1h-1zM7 9h1v1h-1zM14 9h1v1h-1zM23 9h1v1h-1zM28 9h1v1h-1zM33 9h1v1h-1zM40 9h1v1h-1zM0 10h1v1h-1zM5 10h1v1h-1zM14 10h1v1h-1zM23 10h1v1h-1zM29 10h1v1h-1zM32 10h1v1h-1zM39 10h1v1h-1zM0 11h1v1h-1zM5 11h1v1h-1zM14 11h1v1h-1zM23 11h1v1h-1zM29 11h1v1h-1zM32 11h1v1h-1zM39 11h1v1h-1zM20 15h1v1h-1zM8 17h2v1h-2zM26 17h1v1h-1zM2 19h1v1h-1zM5 19h1v1h-1zM8 19h1v1h-1zM10 19h1v1h-1zM17 19h1v1h-1zM35 19h1v1h-1zM37 19h1v1h-1zM44 19h1v1h-1zM53 19h2v1h-2zM61 19h2v1h-2zM65 19h1v1h-1zM69 19h1v1h-1zM71 19h1v1h-1zM75 19h1v1h-1zM90 19h2v1h-2zM93 19h1v1h-1zM100 19h1v1h-1zM102 19h1v1h-1zM104 19h2v1h-2zM107 19h1v1h-1zM109 19h2v1h-2zM5 21h1v1h-1zM8 21h1v1h-1zM11 21h1v1h-1zM13 21h1v1h-1zM20 21h1v1h-1zM31 21h1v1h-1zM37 21h1v1h-1zM41 21h1v1h-1zM46 21h2v1h-2zM51 21h1v1h-1zM63 21h2v1h-2zM68 21h1v1h-1zM74 21h2v1h-2zM79 21h1v1h-1zM82 21h1v1h-1zM85 21h1v1h-1zM90 21h1v1h-1zM92 21h1v1h-1zM100 21h1v1h-1zM102 21h2v1h-2zM106 21h1v1h-1zM108 21h2v1h-2zM5 23h1v1h-1zM8 23h1v1h-1zM11 23h1v1h-1zM13 23h1v1h-1zM22 23h1v1h-1zM29 23h1v1h-1zM37 23h1v1h-1zM44 23h1v1h-1zM49 23h2v1h-2zM54 23h1v1h-1zM66 23h2v1h-2zM71 23h1v1h-1zM77 23h2v1h-2zM82 23h1v1h-1zM85 23h1v1h-1zM88 23h1v1h-1zM93 23h1v1h-1zM95 23h1v1h-1zM103 23h1v1h-1zM105 23h2v1h-2zM109 23h1v1h-1zM111 23h1v1h-1zM6 25h2v1h-2zM11 25h2v1h-2zM21 25h1v1h-1zM23 25h2v1h-2zM34 25h2v1h-2zM37 25h1v1h-1zM39 25h2v1h-2zM48 25h2v1h-2zM59 25h1v1h-1zM62 25h1v1h-1zM68 25h1v1h-1zM71 25h1v1h-1zM73 25h1v1h-1zM82 25h1v1h-1zM88 25h1v1h-1zM90 25h1v1h-1zM95 25h1v1h-1zM109 25h1v1h-1zM27 35h1v1h-1zM33 35h1v1h-1zM37 35h1v1h-1zM39 35h1v1h-1zM42 35h1v1h-1zM47 35h1v1h-1zM57 35h1v1h-1zM61 35h1v1h-1zM63 35h1v1h-1zM66 35h1v1h-1zM25 37h1v1h-1zM32 37h1v1h-1zM37 37h1v1h-1zM26 39h2v1h-2zM43 39h1v1h-1zM48 39h1v1h-1zM58 39h2v1h-2zM66 39h1v1h-1zM8 41h2v1h-2zM23 43h1v1h-1zM26 43h1v1h-1zM29 43h1v1h-1zM36 43h1v1h-1zM46 43h1v1h-1zM49 43h1v1h-1zM32 45h1v1h-1zM41 45h1v1h-1zM47 45h1v1h-1zM59 45h1v1h-1zM64 45h2v1h-2zM69 45h1v1h-1zM73 45h1v1h-1zM86 45h1v1h-1zM26 47h1v1h-1zM31 47h1v1h-1zM34 47h1v1h-1zM38 47h1v1h-1zM40 47h1v1h-1zM26 49h1v1h-1zM31 49h1v1h-1zM33 49h1v1h-1zM35 49h1v1h-1zM38 49h1v1h-1zM40 49h1v1h-1zM24 51h1v1h-1zM29 51h1v1h-1zM44 51h1v1h-1zM50 51h1v1h-1zM3 55h1v1h-1zM12 55h1v1h-1zM19 55h1v1h-1zM24 55h1v1h-1zM9 69h1v1h-1zM11 69h1v1h-1zM14 69h1v1h-1zM22 69h1v1h-1zM39 69h1v1h-1zM42 69h1v1h-1zM14 77h2v1h-2zM25 77h1v1h-1zM27 79h1v1h-1zM35 79h2v1h-2zM27 81h1v1h-1zM31 81h1v1h-1zM32 83h1v1h-1zM37 83h2v1h-2zM32 85h1v1h-1zM40 85h1v1h-1zM27 87h1v1h-1zM31 87h2v1h-2zM35 87h1v1h-1z"/><path fill="#6a9955" fill-opacity="0.6" d="M2 3h2v1h-2zM9 3h3v1h-3zM14 3h5v1h-5zM21 3h5v1h-5zM29 3h4v1h-4zM36 3h4v1h-4zM7 5h1v1h-1zM28 5h1v1h-1zM33 5h1v1h-1zM15 7h4v1h-4zM37 7h3v1h-3zM2 9h2v1h-2zM19 9h1v1h-1zM9 11h3v1h-3zM21 11h2v1h-2zM24 11h2v1h-2zM30 11h2v1h-2zM36 11h3v1h-3zM18 15h2v1h-2zM21 15h3v1h-3zM25 15h1v1h-1zM27 15h1v1h-1zM29 15h1v1h-1zM2 17h4v1h-4zM7 17h1v1h-1zM24 17h2v1h-2zM27 17h3v1h-3zM31 17h1v1h-1zM33 17h1v1h-1zM35 17h1v1h-1zM1 19h1v1h-1zM4 19h1v1h-1zM6 19h1v1h-1zM9 19h1v1h-1zM12 19h2v1h-2zM15 19h2v1h-2zM19 19h3v1h-3zM24 19h1v1h-1zM26 19h6v1h-6zM33 19h2v1h-2zM39 19h4v1h-4zM45 19h4v1h-4zM51 19h1v1h-1zM56 19h2v1h-2zM59 19h1v1h-1zM63 19h2v1h-2zM67 19h2v1h-2zM73 19h2v1h-2zM77 19h2v1h-2zM81 19h3v1h-3zM85 19h4v1h-4zM92 19h1v1h-1zM95 19h4v1h-4zM101 19h1v1h-1zM106 19h1v1h-1zM111 19h1v1h-1zM4 21h1v1h-1zM7 21h1v1h-1zM9 21h1v1h-1zM12 21h1v1h-1zM15 21h3v1h-3zM19 21h1v1h-1zM22 21h6v1h-6zM29 21h2v1h-2zM32 21h1v1h-1zM34 21h3v1h-3zM39 21h2v1h-2zM42 21h1v1h-1zM44 21h1v1h-1zM48 21h1v1h-1zM50 21h1v1h-1zM52 21h3v1h-3zM56 21h5v1h-5zM62 21h1v1h-1zM66 21h2v1h-2zM70 21h2v1h-2zM77 21h1v1h-1zM81 21h1v1h-1zM84 21h1v1h-1zM87 21h3v1h-3zM94 21h3v1h-3zM98 21h2v1h-2zM104 21h1v1h-1zM107 21h1v1h-1zM110 21h2v1h-2zM4 23h1v1h-1zM7 23h1v1h-1zM9 23h1v1h-1zM12 23h1v1h-1zM15 23h3v1h-3zM20 23h1v1h-1zM24 23h4v1h-4zM30 23h3v1h-3zM34 23h3v1h-3zM39 23h5v1h-5zM45 23h3v1h-3zM51 23h1v1h-1zM53 23h1v1h-1zM55 23h3v1h-3zM59 23h5v1h-5zM65 23h1v1h-1zM69 23h2v1h-2zM73 23h2v1h-2zM80 23h1v1h-1zM84 23h1v1h-1zM87 23h1v1h-1zM90 23h3v1h-3zM97 23h3v1h-3zM101 23h2v1h-2zM107 23h1v1h-1zM110 23h1v1h-1zM4 25h1v1h-1zM8 25h2v1h-2zM13 25h1v1h-1zM15 25h4v1h-4zM20 25h1v1h-1zM25 25h1v1h-1zM27 25h5v1h-5zM33 25h1v1h-1zM38 25h1v1h-1zM41 25h2v1h-2zM44 25h3v1h-3zM50 25h1v1h-1zM52 25h5v1h-5zM58 25h1v1h-1zM63 25h1v1h-1zM65 25h3v1h-3zM69 25h1v1h-1zM72 25h1v1h-1zM74 25h3v1h-3zM78 25h3v1h-3zM83 25h1v1h-1zM85 25h3v1h-3zM91 25h1v1h-1zM93 25h2v1h-2zM96 25h4v1h-4zM101 25h2v1h-2zM104 25h5v1h-5zM110 25h1v1h-1zM7 33h1v1h-1zM9 33h1v1h-1zM28 35h2v1h-2zM31 35h2v1h-2zM34 35h3v1h-3zM38 35h1v1h-1zM40 35h2v1h-2zM48 35h2v1h-2zM51 35h3v1h-3zM55 35h2v1h-2zM58 35h3v1h-3zM62 35h1v1h-1zM64 35h2v1h-2zM26 37h5v1h-5zM34 37h3v1h-3zM28 39h1v1h-1zM30 39h3v1h-3zM34 39h3v1h-3zM38 39h5v1h-5zM45 39h2v1h-2zM50 39h2v1h-2zM54 39h1v1h-1zM56 39h1v1h-1zM61 39h5v1h-5zM67 39h1v1h-1zM7 41h1v1h-1zM10 41h2v1h-2zM24 43h2v1h-2zM27 43h2v1h-2zM30 43h1v1h-1zM33 43h2v1h-2zM37 43h1v1h-1zM47 43h2v1h-2zM23 45h6v1h-6zM30 45h2v1h-2zM34 45h2v1h-2zM37 45h3v1h-3zM42 45h1v1h-1zM48 45h2v1h-2zM51 45h4v1h-4zM60 45h2v1h-2zM63 45h1v1h-1zM67 45h2v1h-2zM74 45h2v1h-2zM77 45h4v1h-4zM82 45h3v1h-3zM87 45h1v1h-1zM23 47h3v1h-3zM27 47h2v1h-2zM30 47h1v1h-1zM33 47h1v1h-1zM35 47h2v1h-2zM41 47h1v1h-1zM46 47h2v1h-2zM23 49h3v1h-3zM27 49h2v1h-2zM30 49h1v1h-1zM34 49h1v1h-1zM36 49h1v1h-1zM41 49h1v1h-1zM46 49h2v1h-2zM23 51h1v1h-1zM25 51h3v1h-3zM30 51h2v1h-2zM33 51h2v1h-2zM36 51h4v1h-4zM41 51h2v1h-2zM46 51h4v1h-4zM53 51h1v1h-1zM55 51h2v1h-2zM9 53h1v1h-1zM11 53h2v1h-2zM4 55h2v1h-2zM7 55h2v1h-2zM10 55h2v1h-2zM13 55h3v1h-3zM18 55h1v1h-1zM20 55h4v1h-4zM7 69h2v1h-2zM13 69h1v1h-1zM16 69h6v1h-6zM23 69h3v1h-3zM29 69h1v1h-1zM31 69h1v1h-1zM40 69h2v1h-2zM13 77h1v1h-1zM16 77h2v1h-2zM19 77h6v1h-6zM28 79h2v1h-2zM31 79h2v1h-2zM34 79h1v1h-1zM37 79h4v1h-4zM28 81h3v1h-3zM33 81h2v1h-2zM27 83h3v1h-3zM31 83h1v1h-1zM33 83h2v1h-2zM36 83h1v1h-1zM39 83h4v1h-4zM27 85h3v1h-3zM31 85h1v1h-1zM33 85h2v1h-2zM36 85h4v1h-4zM33 87h2v1h-2z"/><path fill="#b5cea8" fill-opacity="0.4" d="M6 34h1v1h-1zM6 35h1v1h-1zM7 36h3v1h-3zM7 37h3v1h-3zM17 38h5v1h-5zM17 39h5v1h-5zM11 42h4v1h-4zM11 43h4v1h-4zM9 44h1v1h-1zM9 45h1v1h-1zM11 46h1v1h-1zM11 47h1v1h-1zM11 48h1v1h-1zM11 49h1v1h-1zM12 50h3v1h-3zM12 51h3v1h-3zM14 56h1v1h-1zM14 57h1v1h-1zM16 58h2v1h-2zM16 59h2v1h-2zM14 90h4v1h-4zM14 91h4v1h-4zM12 92h1v1h-1zM12 93h1v1h-1zM19 98h1v1h-1zM19 99h1v1h-1zM35 102h1v1h-1zM35 103h1v1h-1zM18 136h1v1h-1zM46 136h1v1h-1zM18 137h1v1h-1zM46 137h1v1h-1z"/><path fill="#ce9178" fill-opacity="0.1" d="M32 108h1v1h-1zM21 118h1v1h-1zM16 132h1v1h-1zM93 132h1v1h-1z"/><path fill="#ce9178" fill-opacity="0.2" d="M27 104h1v1h-1zM32 109h1v1h-1zM21 119h1v1h-1zM15 124h1v1h-1zM29 125h3v1h-3zM16 130h1v1h-1zM19 131h3v1h-3zM24 132h1v1h-1zM94 132h1v1h-1zM96 133h3v1h-3zM16 144h1v1h-1zM45 144h1v1h-1z"/><path fill="#ce9178" fill-opacity="0.3" d="M16 86h1v1h-1zM18 104h1v1h-1zM20 104h1v1h-1zM30 104h1v1h-1zM17 108h2v1h-2zM25 108h1v1h-1zM11 118h1v1h-1zM14 124h1v1h-1zM19 124h1v1h-1zM12 130h1v1h-1zM14 132h1v1h-1zM18 132h1v1h-1zM58 132h1v1h-1zM12 144h1v1h-1zM15 144h1v1h-1zM30 144h2v1h-2zM38 144h1v1h-1zM47 144h1v1h-1z"/><path fill="#ce9178" fill-opacity="0.4" d="M15 86h1v1h-1zM17 86h1v1h-1zM14 104h2v1h-2zM31 104h1v1h-1zM15 105h1v1h-1zM27 105h1v1h-1zM14 108h2v1h-2zM34 108h1v1h-1zM15 109h1v1h-1zM10 118h1v1h-1zM14 118h1v1h-1zM16 118h1v1h-1zM18 118h3v1h-3zM22 118h1v1h-1zM14 119h1v1h-1zM16 119h1v1h-1zM18 119h3v1h-3zM10 124h1v1h-1zM22 124h1v1h-1zM24 124h1v1h-1zM26 124h3v1h-3zM32 124h1v1h-1zM15 125h1v1h-1zM22 125h1v1h-1zM24 125h1v1h-1zM26 125h3v1h-3zM10 130h1v1h-1zM22 130h1v1h-1zM16 131h1v1h-1zM10 132h2v1h-2zM27 132h1v1h-1zM57 132h1v1h-1zM60 132h1v1h-1zM92 132h1v1h-1zM99 132h1v1h-1zM11 133h1v1h-1zM24 133h1v1h-1zM94 133h1v1h-1zM10 144h2v1h-2zM20 144h1v1h-1zM22 144h1v1h-1zM24 144h3v1h-3zM28 144h1v1h-1zM48 144h1v1h-1zM11 145h1v1h-1zM16 145h1v1h-1zM20 145h1v1h-1zM22 145h1v1h-1zM24 145h3v1h-3zM28 145h1v1h-1zM45 145h1v1h-1z"/><path fill="#ce9178" fill-opacity="0.5" d="M16 87h1v1h-1zM18 105h1v1h-1zM20 105h1v1h-1zM30 105h1v1h-1zM17 109h2v1h-2zM25 109h1v1h-1zM11 119h1v1h-1zM14 125h1v1h-1zM19 125h1v1h-1zM12 131h1v1h-1zM14 133h1v1h-1zM18 133h1v1h-1zM58 133h1v1h-1zM12 145h1v1h-1zM15 145h1v1h-1zM30 145h2v1h-2zM38 145h1v1h-1zM47 145h1v1h-1z"/><path fill="#ce9178" fill-opacity="0.6" d="M16 105h1v1h-1zM19 105h1v1h-1zM21 105h1v1h-1zM23 105h4v1h-4zM28 105h2v1h-2zM16 109h1v1h-1zM19 109h2v1h-2zM22 109h3v1h-3zM27 109h5v1h-5zM12 119h1v1h-1zM15 119h1v1h-1zM17 119h1v1h-1zM11 125h3v1h-3zM16 125h2v1h-2zM20 125h1v1h-1zM23 125h1v1h-1zM25 125h1v1h-1zM11 131h1v1h-1zM13 131h3v1h-3zM17 131h2v1h-2zM12 133h2v1h-2zM16 133h2v1h-2zM19 133h1v1h-1zM21 133h2v1h-2zM25 133h1v1h-1zM93 133h1v1h-1zM95 133h1v1h-1zM13 145h2v1h-2zM17 145h2v1h-2zM21 145h1v1h-1zM23 145h1v1h-1zM29 145h1v1h-1zM32 145h2v1h-2zM35 145h3v1h-3zM39 145h2v1h-2zM42 145h3v1h-3zM46 145h1v1h-1z"/><path fill="#d4d4d4" fill-opacity="0.1" d="M9 38h1v1h-1zM4 50h1v1h-1zM6 90h1v1h-1zM17 96h1v1h-1zM76 96h1v1h-1zM14 110h1v1h-1zM10 120h1v1h-1zM50 126h1v1h-1z"/><path fill="#d4d4d4" fill-opacity="0.2" d="M4 34h1v1h-1zM4 35h1v1h-1zM5 36h1v1h-1zM5 37h1v1h-1zM4 38h1v1h-1zM8 38h1v1h-1zM15 38h1v1h-1zM15 39h1v1h-1zM9 42h1v1h-1zM9 43h1v1h-1zM3 44h1v1h-1zM7 44h1v1h-1zM7 45h1v1h-1zM5 46h1v1h-1zM9 46h1v1h-1zM9 47h1v1h-1zM5 48h1v1h-1zM9 48h1v1h-1zM9 49h1v1h-1zM3 50h1v1h-1zM10 50h1v1h-1zM10 51h1v1h-1zM3 56h1v1h-1zM12 56h1v1h-1zM12 57h1v1h-1zM3 58h1v1h-1zM7 58h1v1h-1zM14 58h1v1h-1zM14 59h1v1h-1zM6 70h1v1h-1zM31 70h1v1h-1zM40 70h1v1h-1zM49 70h1v1h-1zM7 71h1v1h-1zM27 71h1v1h-1zM34 71h1v1h-1zM43 71h1v1h-1zM6 72h1v1h-1zM7 73h1v1h-1zM7 78h1v1h-1zM16 78h1v1h-1zM16 79h1v1h-1zM13 80h1v1h-1zM13 81h1v1h-1zM13 82h1v1h-1zM13 83h1v1h-1zM12 84h1v1h-1zM12 85h1v1h-1zM13 86h1v1h-1zM13 87h1v1h-1zM5 90h1v1h-1zM12 90h1v1h-1zM12 91h1v1h-1zM10 92h1v1h-1zM10 93h1v1h-1zM11 96h1v1h-1zM15 96h1v1h-1zM30 96h1v1h-1zM75 96h1v1h-1zM11 97h1v1h-1zM16 97h1v1h-1zM38 97h1v1h-1zM47 97h1v1h-1zM56 97h1v1h-1zM64 97h1v1h-1zM73 97h1v1h-1zM81 97h1v1h-1zM6 98h1v1h-1zM7 99h1v1h-1zM14 102h2v1h-2zM32 102h2v1h-2zM14 103h2v1h-2zM32 103h2v1h-2zM12 104h1v1h-1zM12 105h1v1h-1zM10 108h1v1h-1zM10 110h1v1h-1zM11 111h1v1h-1zM12 112h1v1h-1zM12 113h1v1h-1zM6 118h1v1h-1zM6 120h1v1h-1zM7 121h1v1h-1zM6 124h1v1h-1zM21 126h1v1h-1zM25 126h1v1h-1zM45 126h1v1h-1zM49 126h1v1h-1zM7 127h1v1h-1zM15 127h1v1h-1zM21 127h1v1h-1zM26 127h1v1h-1zM39 127h1v1h-1zM55 127h1v1h-1zM60 127h1v1h-1zM6 130h1v1h-1zM6 132h1v1h-1zM37 132h1v1h-1zM44 132h1v1h-1zM70 132h1v1h-1zM77 132h1v1h-1zM81 132h1v1h-1zM29 133h2v1h-2zM54 133h2v1h-2zM62 133h2v1h-2zM89 133h2v1h-2zM6 136h1v1h-1zM23 136h1v1h-1zM35 136h1v1h-1zM39 136h1v1h-1zM7 137h1v1h-1zM19 137h1v1h-1zM31 137h1v1h-1zM45 137h1v1h-1zM6 144h1v1h-1z"/><path fill="#d4d4d4" fill-opacity="0.3" d="M2 34h1v1h-1zM3 36h1v1h-1zM13 38h1v1h-1zM0 42h1v1h-1zM3 42h1v1h-1zM6 42h1v1h-1zM4 44h1v1h-1zM1 46h1v1h-1zM6 46h1v1h-1zM0 48h1v1h-1zM2 48h1v1h-1zM6 48h1v1h-1zM8 50h1v1h-1zM5 56h1v1h-1zM5 58h1v1h-1zM10 58h1v1h-1zM13 64h1v1h-1zM15 70h1v1h-1zM19 70h1v1h-1zM22 70h1v1h-1zM25 70h1v1h-1zM32 70h1v1h-1zM36 70h1v1h-1zM41 70h1v1h-1zM44 70h1v1h-1zM46 70h1v1h-1zM50 70h1v1h-1zM14 72h1v1h-1zM16 72h1v1h-1zM4 78h1v1h-1zM12 78h2v1h-2zM10 79h1v1h-1zM4 80h1v1h-1zM10 80h1v1h-1zM7 81h1v1h-1zM9 82h2v1h-2zM7 83h1v1h-1zM10 84h1v1h-1zM7 85h1v1h-1zM4 86h1v1h-1zM6 86h1v1h-1zM4 90h1v1h-1zM10 90h1v1h-1zM6 92h1v1h-1zM5 96h1v1h-1zM7 96h1v1h-1zM19 96h2v1h-2zM27 96h1v1h-1zM35 96h2v1h-2zM39 96h1v1h-1zM45 96h1v1h-1zM53 96h2v1h-2zM63 96h1v1h-1zM65 96h1v1h-1zM67 96h1v1h-1zM74 96h1v1h-1zM80 96h1v1h-1zM84 96h1v1h-1zM33 97h1v1h-1zM42 97h1v1h-1zM51 97h1v1h-1zM60 97h1v1h-1zM14 98h1v1h-1zM16 98h1v1h-1zM11 102h2v1h-2zM29 102h2v1h-2zM10 104h1v1h-1zM12 108h1v1h-1zM12 110h1v1h-1zM24 110h2v1h-2zM28 110h1v1h-1zM10 112h1v1h-1zM18 112h2v1h-2zM8 118h1v1h-1zM8 120h1v1h-1zM18 120h1v1h-1zM8 124h1v1h-1zM14 126h1v1h-1zM19 126h1v1h-1zM27 126h1v1h-1zM34 126h1v1h-1zM38 126h1v1h-1zM54 126h1v1h-1zM59 126h1v1h-1zM65 126h1v1h-1zM8 130h1v1h-1zM8 132h1v1h-1zM32 132h1v1h-1zM35 132h1v1h-1zM46 132h1v1h-1zM65 132h1v1h-1zM68 132h1v1h-1zM79 132h1v1h-1zM84 132h1v1h-1zM10 136h1v1h-1zM13 136h1v1h-1zM25 136h1v1h-1zM37 136h1v1h-1zM42 136h1v1h-1zM12 142h1v1h-1zM15 142h1v1h-1zM8 144h1v1h-1z"/><path fill="#d4d4d4" fill-opacity="0.4" d="M7 38h1v1h-1zM4 39h1v1h-1zM7 39h2v1h-2zM3 45h1v1h-1zM4 46h1v1h-1zM4 47h2v1h-2zM4 48h1v1h-1zM4 49h2v1h-2zM2 50h1v1h-1zM2 51h2v1h-2zM6 56h1v1h-1zM3 57h1v1h-1zM6 57h1v1h-1zM6 58h1v1h-1zM3 59h1v1h-1zM6 59h2v1h-2zM11 64h1v1h-1zM16 64h2v1h-2zM11 65h1v1h-1zM16 65h2v1h-2zM10 70h4v1h-4zM18 70h1v1h-1zM39 70h1v1h-1zM48 70h1v1h-1zM52 70h1v1h-1zM6 71h1v1h-1zM10 71h4v1h-4zM18 71h1v1h-1zM31 71h1v1h-1zM39 71h2v1h-2zM48 71h2v1h-2zM52 71h1v1h-1zM10 72h4v1h-4zM18 72h3v1h-3zM6 73h1v1h-1zM10 73h4v1h-4zM18 73h3v1h-3zM7 79h1v1h-1zM8 86h1v1h-1zM8 87h1v1h-1zM5 91h1v1h-1zM23 96h4v1h-4zM69 96h1v1h-1zM87 96h1v1h-1zM15 97h1v1h-1zM23 97h4v1h-4zM30 97h1v1h-1zM69 97h1v1h-1zM75 97h1v1h-1zM87 97h1v1h-1zM10 98h4v1h-4zM18 98h1v1h-1zM20 98h1v1h-1zM6 99h1v1h-1zM10 99h4v1h-4zM18 99h1v1h-1zM20 99h1v1h-1zM13 108h1v1h-1zM35 108h1v1h-1zM10 109h1v1h-1zM13 109h1v1h-1zM35 109h1v1h-1zM16 110h1v1h-1zM19 110h1v1h-1zM26 110h1v1h-1zM29 110h1v1h-1zM10 111h1v1h-1zM16 111h1v1h-1zM19 111h1v1h-1zM26 111h1v1h-1zM29 111h1v1h-1zM9 118h1v1h-1zM24 118h1v1h-1zM6 119h1v1h-1zM9 119h1v1h-1zM24 119h1v1h-1zM12 120h1v1h-1zM15 120h1v1h-1zM19 120h1v1h-1zM6 121h1v1h-1zM12 121h1v1h-1zM15 121h1v1h-1zM19 121h1v1h-1zM9 124h1v1h-1zM33 124h1v1h-1zM6 125h1v1h-1zM9 125h1v1h-1zM33 125h1v1h-1zM31 126h1v1h-1zM35 126h1v1h-1zM48 126h1v1h-1zM66 126h1v1h-1zM25 127h1v1h-1zM31 127h1v1h-1zM35 127h1v1h-1zM45 127h1v1h-1zM48 127h2v1h-2zM66 127h1v1h-1zM9 130h1v1h-1zM23 130h1v1h-1zM6 131h1v1h-1zM9 131h1v1h-1zM23 131h1v1h-1zM9 132h1v1h-1zM40 132h1v1h-1zM47 132h1v1h-1zM52 132h1v1h-1zM73 132h1v1h-1zM80 132h1v1h-1zM87 132h1v1h-1zM100 132h1v1h-1zM6 133h1v1h-1zM9 133h1v1h-1zM37 133h1v1h-1zM40 133h1v1h-1zM44 133h1v1h-1zM47 133h1v1h-1zM52 133h1v1h-1zM70 133h1v1h-1zM73 133h1v1h-1zM77 133h1v1h-1zM80 133h2v1h-2zM87 133h1v1h-1zM100 133h1v1h-1zM11 136h1v1h-1zM15 136h1v1h-1zM17 136h1v1h-1zM26 136h1v1h-1zM38 136h1v1h-1zM47 136h1v1h-1zM6 137h1v1h-1zM11 137h1v1h-1zM15 137h1v1h-1zM17 137h1v1h-1zM23 137h1v1h-1zM26 137h1v1h-1zM35 137h1v1h-1zM38 137h2v1h-2zM47 137h1v1h-1zM11 142h1v1h-1zM18 142h2v1h-2zM11 143h1v1h-1zM18 143h2v1h-2zM9 144h1v1h-1zM49 144h1v1h-1zM6 145h1v1h-1zM9 145h1v1h-1zM49 145h1v1h-1z"/><path fill="#d4d4d4" fill-opacity="0.5" d="M2 35h1v1h-1zM3 37h1v1h-1zM13 39h1v1h-1zM0 43h1v1h-1zM3 43h1v1h-1zM6 43h1v1h-1zM4 45h1v1h-1zM1 47h1v1h-1zM6 47h1v1h-1zM0 49h1v1h-1zM2 49h1v1h-1zM6 49h1v1h-1zM8 51h1v1h-1zM5 57h1v1h-1zM5 59h1v1h-1zM10 59h1v1h-1zM13 65h1v1h-1zM15 71h1v1h-1zM19 71h1v1h-1zM22 71h1v1h-1zM25 71h1v1h-1zM32 71h1v1h-1zM36 71h1v1h-1zM41 71h1v1h-1zM44 71h1v1h-1zM46 71h1v1h-1zM50 71h1v1h-1zM14 73h1v1h-1zM16 73h1v1h-1zM4 79h1v1h-1zM12 79h2v1h-2zM4 81h1v1h-1zM10 81h1v1h-1zM9 83h2v1h-2zM10 85h1v1h-1zM4 87h1v1h-1zM6 87h1v1h-1zM4 91h1v1h-1zM10 91h1v1h-1zM6 93h1v1h-1zM5 97h1v1h-1zM7 97h1v1h-1zM19 97h2v1h-2zM27 97h1v1h-1zM35 97h2v1h-2zM39 97h1v1h-1zM45 97h1v1h-1zM53 97h2v1h-2zM63 97h1v1h-1zM65 97h1v1h-1zM67 97h1v1h-1zM74 97h1v1h-1zM80 97h1v1h-1zM84 97h1v1h-1zM14 99h1v1h-1zM16 99h1v1h-1zM24 102h1v1h-1zM11 103h2v1h-2zM24 103h1v1h-1zM29 103h2v1h-2zM10 105h1v1h-1zM12 109h1v1h-1zM12 111h1v1h-1zM24 111h2v1h-2zM28 111h1v1h-1zM10 113h1v1h-1zM18 113h2v1h-2zM8 119h1v1h-1zM8 121h1v1h-1zM18 121h1v1h-1zM8 125h1v1h-1zM14 127h1v1h-1zM19 127h1v1h-1zM27 127h1v1h-1zM34 127h1v1h-1zM38 127h1v1h-1zM54 127h1v1h-1zM59 127h1v1h-1zM65 127h1v1h-1zM8 131h1v1h-1zM8 133h1v1h-1zM32 133h1v1h-1zM35 133h1v1h-1zM46 133h1v1h-1zM65 133h1v1h-1zM68 133h1v1h-1zM79 133h1v1h-1zM84 133h1v1h-1zM10 137h1v1h-1zM13 137h1v1h-1zM25 137h1v1h-1zM37 137h1v1h-1zM42 137h1v1h-1zM12 143h1v1h-1zM15 143h1v1h-1zM8 145h1v1h-1z"/><path fill="#d4d4d4" fill-opacity="0.6" d="M0 35h2v1h-2zM0 37h3v1h-3zM0 39h4v1h-4zM5 39h2v1h-2zM9 39h4v1h-4zM1 43h2v1h-2zM4 43h2v1h-2zM7 43h1v1h-1zM0 45h3v1h-3zM5 45h1v1h-1zM0 47h1v1h-1zM2 47h2v1h-2zM7 47h1v1h-1zM1 49h1v1h-1zM3 49h1v1h-1zM7 49h1v1h-1zM0 51h2v1h-2zM4 51h4v1h-4zM0 57h3v1h-3zM4 57h1v1h-1zM7 57h4v1h-4zM0 59h3v1h-3zM4 59h1v1h-1zM8 59h2v1h-2zM11 59h2v1h-2zM9 65h2v1h-2zM12 65h1v1h-1zM14 65h1v1h-1zM4 71h2v1h-2zM8 71h2v1h-2zM14 71h1v1h-1zM16 71h2v1h-2zM20 71h2v1h-2zM23 71h2v1h-2zM26 71h1v1h-1zM28 71h3v1h-3zM33 71h1v1h-1zM35 71h1v1h-1zM37 71h2v1h-2zM42 71h1v1h-1zM45 71h1v1h-1zM47 71h1v1h-1zM51 71h1v1h-1zM4 73h2v1h-2zM8 73h2v1h-2zM15 73h1v1h-1zM17 73h1v1h-1zM5 79h2v1h-2zM8 79h2v1h-2zM11 79h1v1h-1zM14 79h1v1h-1zM5 81h2v1h-2zM8 81h2v1h-2zM11 81h1v1h-1zM4 83h3v1h-3zM8 83h1v1h-1zM11 83h1v1h-1zM4 85h3v1h-3zM8 85h2v1h-2zM5 87h1v1h-1zM7 87h1v1h-1zM9 87h3v1h-3zM6 91h4v1h-4zM4 93h2v1h-2zM7 93h2v1h-2zM4 97h1v1h-1zM6 97h1v1h-1zM8 97h2v1h-2zM13 97h2v1h-2zM17 97h2v1h-2zM21 97h2v1h-2zM28 97h2v1h-2zM31 97h2v1h-2zM34 97h1v1h-1zM37 97h1v1h-1zM40 97h2v1h-2zM43 97h2v1h-2zM46 97h1v1h-1zM48 97h3v1h-3zM52 97h1v1h-1zM55 97h1v1h-1zM57 97h3v1h-3zM61 97h2v1h-2zM66 97h1v1h-1zM68 97h1v1h-1zM70 97h3v1h-3zM76 97h4v1h-4zM82 97h2v1h-2zM85 97h2v1h-2zM4 99h2v1h-2zM8 99h2v1h-2zM15 99h1v1h-1zM17 99h1v1h-1zM7 103h4v1h-4zM25 103h4v1h-4zM8 105h2v1h-2zM8 109h2v1h-2zM11 109h1v1h-1zM8 111h2v1h-2zM13 111h3v1h-3zM17 111h2v1h-2zM20 111h4v1h-4zM27 111h1v1h-1zM8 113h2v1h-2zM14 113h4v1h-4zM4 119h2v1h-2zM7 119h1v1h-1zM4 121h2v1h-2zM9 121h3v1h-3zM13 121h2v1h-2zM16 121h2v1h-2zM4 125h2v1h-2zM7 125h1v1h-1zM4 127h3v1h-3zM9 127h5v1h-5zM17 127h2v1h-2zM23 127h2v1h-2zM28 127h3v1h-3zM32 127h2v1h-2zM36 127h2v1h-2zM41 127h4v1h-4zM46 127h2v1h-2zM50 127h4v1h-4zM57 127h2v1h-2zM62 127h3v1h-3zM4 131h2v1h-2zM7 131h1v1h-1zM4 133h2v1h-2zM7 133h1v1h-1zM33 133h2v1h-2zM36 133h1v1h-1zM38 133h2v1h-2zM41 133h3v1h-3zM45 133h1v1h-1zM48 133h4v1h-4zM66 133h2v1h-2zM69 133h1v1h-1zM71 133h2v1h-2zM74 133h3v1h-3zM78 133h1v1h-1zM82 133h2v1h-2zM85 133h2v1h-2zM4 137h2v1h-2zM8 137h2v1h-2zM12 137h1v1h-1zM14 137h1v1h-1zM16 137h1v1h-1zM20 137h3v1h-3zM24 137h1v1h-1zM27 137h4v1h-4zM32 137h3v1h-3zM36 137h1v1h-1zM40 137h2v1h-2zM43 137h2v1h-2zM9 143h2v1h-2zM13 143h2v1h-2zM16 143h2v1h-2zM4 145h2v1h-2zM7 145h1v1h-1z"/></svg>
<div id="vscroll" class="a"></div>
<div class="a" style="left:1905px;top:194px;width:15px;height:1px;background:#3a3a3a"></div>

<!-- ===== Panel ===== -->
<div id="panel" class="a"></div>
<div class="a ptab" style="left:440px">PROBLEMS</div>
<div class="a ptab" style="left:521px;color:#e7e7e7">OUTPUT</div>
<div class="a" style="left:521px;top:815px;width:46px;height:1px;background:#e7e7e7"></div>
<div class="a ptab" style="left:587px">INTERACTIVE MODE</div>
<svg class="a" style="left:1852px;top:786px" width="16" height="12" viewBox="0 0 16 12"><path d="M3 8.2 L8 3.2 L13 8.2" stroke="#c5c5c5" stroke-width="1.1" fill="none"/></svg>
<svg class="a" style="left:1888px;top:786px" width="12" height="12"><path d="M1.8 1.8 L10.2 10.2 M10.2 1.8 L1.8 10.2" stroke="#c5c5c5" stroke-width="1.1"/></svg>
<div class="ol" style="top:819px">[10:03:23:465] ACK24</div>
<div class="ol" style="top:838px">[10:03:23:721] ACK38_ACR_CV_101L_R_D<svg class="nul" width="14" height="15" viewBox="0 0 14 15"><rect width="14" height="15" fill="#a00000"/><path d="M2.5 6V2.5L4.5 6V2.5M6.3 5.5V8.5H8.3V5.5M10 8.5V12.5H12" stroke="#f0a0a0" stroke-width="0.8" fill="none"/></svg></div>
<div class="ol" style="top:857px">[10:03:23:977] ACK36_CV_FW_2.13.18-7-g42ab7d35f26b5<svg class="nul" width="14" height="15" viewBox="0 0 14 15"><rect width="14" height="15" fill="#a00000"/><path d="M2.5 6V2.5L4.5 6V2.5M6.3 5.5V8.5H8.3V5.5M10 8.5V12.5H12" stroke="#f0a0a0" stroke-width="0.8" fill="none"/></svg></div>
<div class="ol" style="top:876px">[10:03:44:462] ACK24ACK24ACK38_ACR_CV_101L_R_D<svg class="nul" width="14" height="15" viewBox="0 0 14 15"><rect width="14" height="15" fill="#a00000"/><path d="M2.5 6V2.5L4.5 6V2.5M6.3 5.5V8.5H8.3V5.5M10 8.5V12.5H12" stroke="#f0a0a0" stroke-width="0.8" fill="none"/></svg>ACK36_CV_FW_2.13.18-7-g42ab7d35f26b5<svg class="nul" width="14" height="15" viewBox="0 0 14 15"><rect width="14" height="15" fill="#a00000"/><path d="M2.5 6V2.5L4.5 6V2.5M6.3 5.5V8.5H8.3V5.5M10 8.5V12.5H12" stroke="#f0a0a0" stroke-width="0.8" fill="none"/></svg></div>
<div class="ol" style="top:895px">[10:10:14:760] ACK24ACK24</div>
<div class="ol" style="top:914px">[10:10:14:993] ACK38_ACR_CV_101L_R_D<svg class="nul" width="14" height="15" viewBox="0 0 14 15"><rect width="14" height="15" fill="#a00000"/><path d="M2.5 6V2.5L4.5 6V2.5M6.3 5.5V8.5H8.3V5.5M10 8.5V12.5H12" stroke="#f0a0a0" stroke-width="0.8" fill="none"/></svg>ACK36_CV_FW_2.13.18-7-g42ab7d35f26b5<svg class="nul" width="14" height="15" viewBox="0 0 14 15"><rect width="14" height="15" fill="#a00000"/><path d="M2.5 6V2.5L4.5 6V2.5M6.3 5.5V8.5H8.3V5.5M10 8.5V12.5H12" stroke="#f0a0a0" stroke-width="0.8" fill="none"/></svg></div>
<div class="ol" style="top:933px">[10:11:15:135] ;`      21][SYS]: console ready</div>
<div class="ol" style="top:952px">[10:11:15:135] [       24][MEM]: init done, heap 48968 bytes, bss 11664 bytes, stack 4128 bytes</div>
<div class="ol" style="top:971px">[10:11:17:729] [     2611][SYS]: Reset Reason: SFTRST reset</div>
<div class="ol" style="top:990px">[10:11:17:729] [     2616][SYS]: FW version: CV_FW_2.13.18-7-g42ab7d35f26b5</div>
<div class="ol" style="top:1009px">[10:11:17:729] [     2622][SYS]: Model: ACR_CV_101L_R_D</div>
<div class="ol" style="top:1028px">[10:11:17:729] [     2626][SYS]: SN: 0</div>
<div class="ol" style="top:1047px">[10:11:17:729] [     2629][SYS]: date / time - 2016/01/01 / 00:07:55</div>
<div id="outshadow" class="a"></div>
<div class="a" style="left:1904px;top:818px;width:1px;height:240px;background:#3a3a3a"></div>
<div class="a" style="left:1905px;top:818px;width:13px;height:2px;background:#7a7a7a"></div>
<div class="a" style="left:1905px;top:820px;width:6px;height:5px;background:#9e6a1a"></div>

<!-- ===== Status bar ===== -->
<div id="status" class="a"></div>
<div class="a st" style="left:12px">Device connected</div>
<div class="a st" style="left:1819px">Ln 1, Col 1</div>
<svg class="a" style="left:1892px;top:1061px" width="16" height="16" viewBox="0 0 16 16"><path d="M3 12 H13 L11.8 10.5 V7 A3.8 3.8 0 0 0 4.2 7 V10.5 Z" stroke="#ffffff" stroke-width="1.1" fill="none"/><path d="M6.5 13.5 A1.5 1.5 0 0 0 9.5 13.5" stroke="#ffffff" stroke-width="1" fill="none"/><circle cx="12.2" cy="4.2" r="3" fill="#2b6002"/><circle cx="12.2" cy="4.2" r="2.6" fill="#ffffff"/></svg>

<!-- ===== Notification ===== -->
<div id="notif" class="a"></div>
<div class="a" style="left:1435px;top:948px;font-size:11px;line-height:14px;color:#cccccc">NOTIFICATIONS</div>
<svg class="a" style="left:1863px;top:946px" width="18" height="16" viewBox="0 0 18 16"><path d="M2 3.5 H16 M2 6.5 H16 M2 9.5 H9.8 M2 12.5 H9.8" stroke="#d0d0d0" stroke-width="1"/><path d="M11.3 9 L15.3 13 M15.3 9 L11.3 13" stroke="#d0d0d0" stroke-width="1"/></svg>
<svg class="a" style="left:1889px;top:949px" width="14" height="10" viewBox="0 0 14 10"><path d="M1.5 2.5 L7 8 L12.5 2.5" stroke="#c5c5c5" stroke-width="1.2" fill="none"/></svg>
<svg class="a" style="left:1441px;top:979px" width="14" height="14" viewBox="0 0 14 14"><circle cx="7" cy="7" r="7" fill="#c8c8c8"/><path d="M3.8 7.2 L6 9.4 L10.4 5" stroke="#252526" stroke-width="1.6" fill="none"/></svg>
<div class="a" style="left:1440px;top:980px;width:425px;font-size:13px;line-height:20px;color:#cccccc;text-indent:17px">Script write complete, restarting the device. The device will reconnect shortly.</div>
<svg class="a" style="left:1886px;top:981px" width="10" height="10"><path d="M1 1 L9 9 M9 1 L1 9" stroke="#c5c5c5" stroke-width="1.1"/></svg>
<div id="circle" class="a"></div>
<svg class="a" style="left:0;top:0" width="1920" height="1080" viewBox="0 0 1920 1080"><path fill="#dedede" fill-rule="evenodd" d="M1367.5 965.6H1376.9V1015.9H1366.7V980.6Q1362 984 1355 985.5V976Q1363 972.5 1367.5 965.6Z M1408 965.6H1416.7V1001H1422.2V1008.2H1416.7V1015.9H1408V1008.2H1386.2V1000.8Z M1408 978.8L1394.6 1001H1408Z"/></svg>
<svg class="a" style="left:1893px;top:1053px" width="12" height="6"><path d="M0 6 L6 0 L12 6 Z" fill="#2b6002"/></svg>
</body></html>
